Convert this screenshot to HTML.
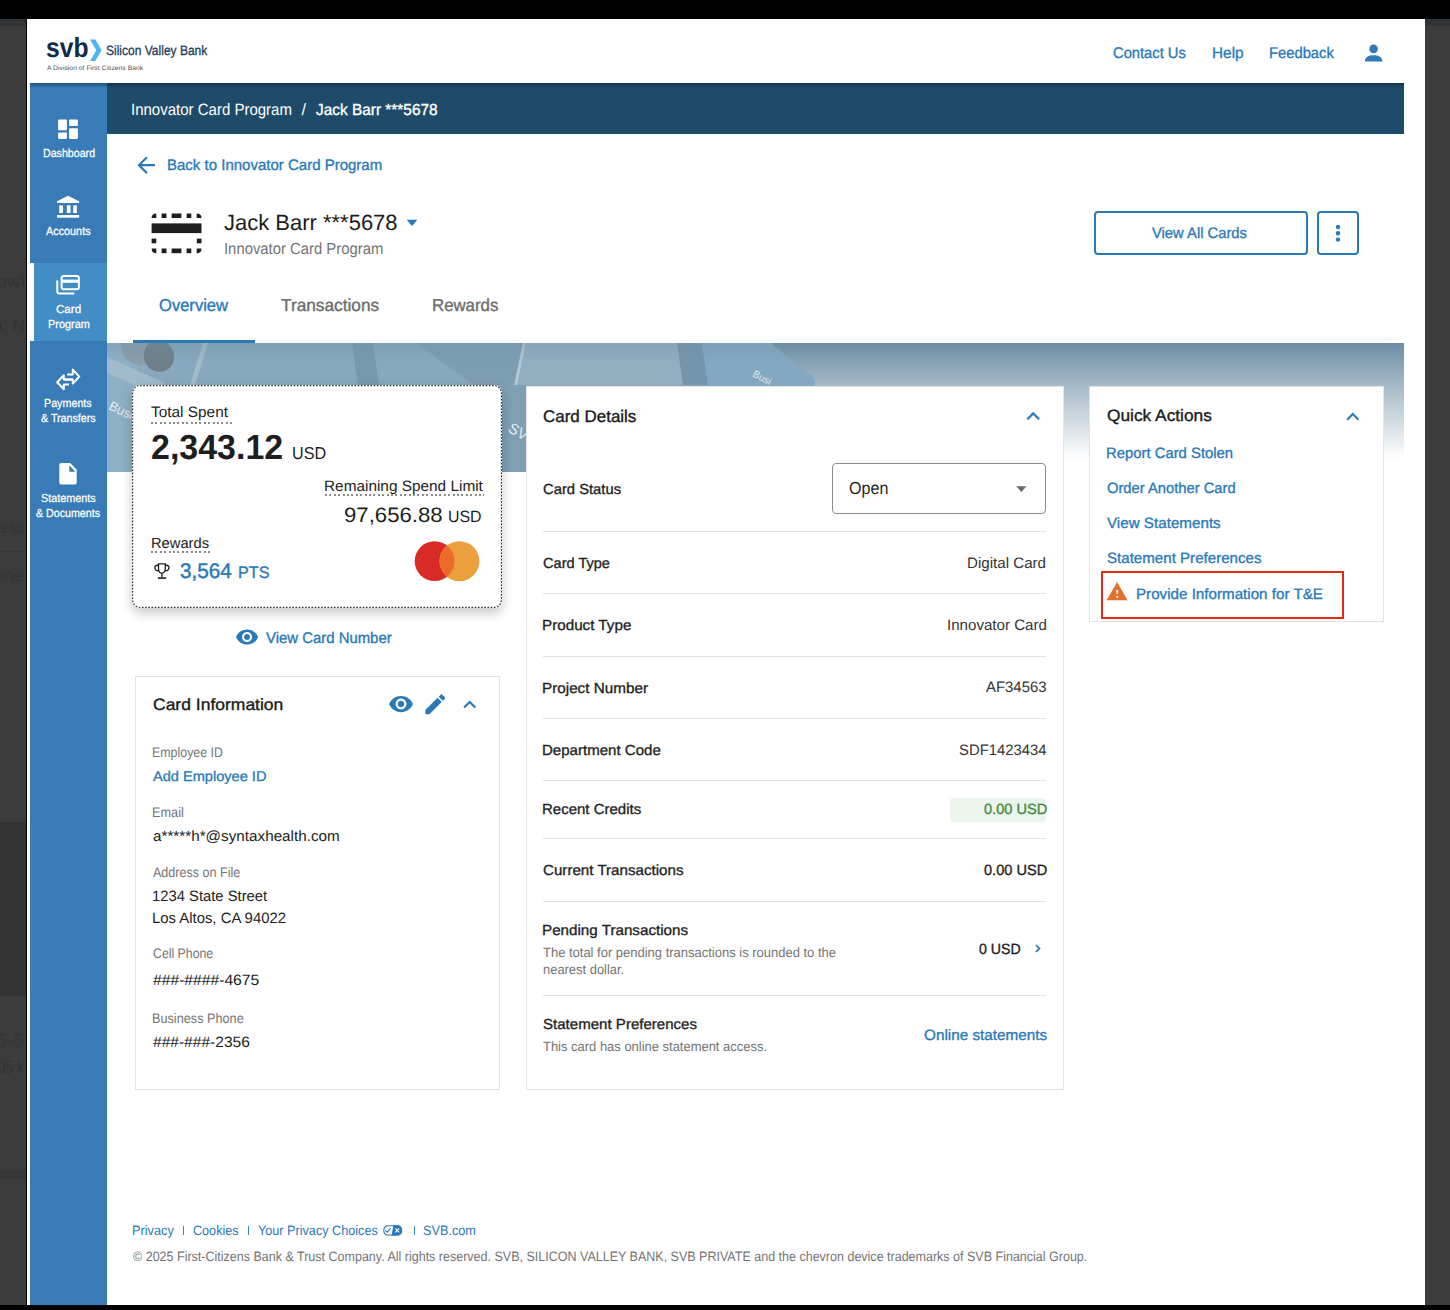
<!DOCTYPE html>
<html><head><meta charset="utf-8">
<style>
html,body{margin:0;padding:0;}
body{width:1450px;height:1310px;position:relative;overflow:hidden;background:#000;font-family:"Liberation Sans",sans-serif;text-rendering:geometricPrecision;}
.a{position:absolute;}
.t{position:absolute;white-space:nowrap;font-family:"Liberation Sans",sans-serif;}
svg{position:absolute;overflow:visible;}
</style></head><body>
<!-- outer frame -->
<div class=a style="left:0;top:19px;width:26px;height:1286px;background:#3c3c3c"></div>
<div class=a style="left:0;top:19px;width:26px;height:7px;background:#313437"></div>
<div class=a style="left:0;top:822px;width:26px;height:174px;background:#333333"></div>
<div class=a style="left:0;top:1170px;width:26px;height:9px;background:#363636"></div>
<div class=a style="left:1425px;top:19px;width:25px;height:1286px;background:#3c3c3c"></div>
<div class=a style="left:0;top:551px;width:26px;height:1px;background:#353535"></div>
<div class=a style="left:1425px;top:19px;width:25px;height:7px;background:#313437"></div>
<div class=a style="left:27px;top:19px;width:1398px;height:1286px;background:#fff"></div>

<!-- sidebar -->
<div class=a style="left:30px;top:83px;width:77px;height:1222px;background:#387bb6"></div>
<div class=a style="left:30px;top:263px;width:4px;height:78px;background:#fff"></div>
<div class=a style="left:34px;top:263px;width:73px;height:78px;background:#428dc6"></div>

<!-- breadcrumb bar -->
<div class=a style="left:107px;top:83px;width:1297px;height:50.5px;background:#1f4b6b"></div>
<div class=a style="left:30px;top:83px;width:1374px;height:5px;background:linear-gradient(rgba(0,10,25,0.38),rgba(0,10,25,0))"></div>

<!-- tab underline -->
<div class=a style="left:133px;top:340px;width:122px;height:3px;background:#2a79b9"></div>

<!-- hero -->
<div class=a style="left:107px;top:343px;width:1297px;height:129px;overflow:hidden;background:#fff">
  <div class=a style="left:600px;top:0;width:697px;height:116px;background:linear-gradient(#6c8da4,#a6bac7 37%,#ffffff)"></div>
  <svg style="left:0;top:0" width="1297" height="129">
    <defs>
      <linearGradient id="hg" x1="0" y1="0" x2="0" y2="1"><stop offset="0" stop-color="#6f8fa5" stop-opacity="0.55"/><stop offset="0.5" stop-color="#6f8fa5" stop-opacity="0"/></linearGradient>
    </defs>
    <polygon points="0,0 663,0 708,36 708,129 0,129" fill="#87a8be"/>
    <polygon points="0,0 30,0 30,129 0,129" fill="#8db0c6"/>
    <circle cx="34" cy="2" r="20" fill="#8b9eab"/>
    <ellipse cx="52" cy="13" rx="15" ry="16" fill="#6f7e89" transform="rotate(-20 52 13)"/>
    <polygon points="0,14 0,30 46,50 58,40" fill="#a9c1cf" opacity="0.7"/>
    <polygon points="96,0 101,0 88,42 83,42" fill="#a8bfcd" opacity="0.8"/>
    <polygon points="245,0 266,0 272,42 251,42" fill="#7898ad"/>
    <polygon points="309,0 417,0 408,42 367,42" fill="#7d9db3"/>
    <polygon points="417,0 570,0 577,42 408,42" fill="#92aec1"/>
    <polygon points="416,0 419,0 410,42 407,42" fill="#b3c8d5"/>
    <polygon points="570,0 595,0 601,42 576,42" fill="#7595ab"/>
    <polygon points="595,0 663,0 704,33 708,42 601,42" fill="#84a8c1"/>
    <polygon points="0,0 663,0 708,36 708,42 0,42" fill="url(#hg)" opacity="0.6"/>
    <polygon points="395,42 420,42 420,129 395,129" fill="#7f9fb5"/>
    <text x="1" y="66" font-family="Liberation Sans" font-size="13" fill="#e3ecf2" transform="rotate(25 1 66)">Busin</text>
    <text x="400" y="88" font-family="Liberation Sans" font-size="15" fill="#e3ecf2" transform="rotate(30 400 88)">SV</text>
    <text x="645" y="33" font-family="Liberation Sans" font-size="10" fill="#dce7ee" transform="rotate(28 645 33)">Busi</text>
  </svg>
</div>

<!-- spend card -->
<div class=a style="left:132px;top:385px;width:370px;height:223px;background:#fff;border-radius:8px;box-shadow:0 5px 12px rgba(0,0,0,0.22)"></div>
<svg style="left:132px;top:385px" width="370" height="223"><rect x="0.6" y="0.6" width="368.8" height="221.8" rx="7.5" fill="none" stroke="#2a2a2a" stroke-width="1.2" stroke-dasharray="1.6 1.6"/></svg>

<!-- card information panel -->
<div class=a style="left:135px;top:676px;width:363px;height:412px;background:#fff;border:1px solid #e3e3e3"></div>

<!-- card details panel -->
<div class=a style="left:526px;top:386px;width:536px;height:702px;background:#fff;border:1px solid #e3e3e3"></div>
<div class=a style="left:831.6px;top:463px;width:212.4px;height:49.2px;border:1px solid #8a8a8a;border-radius:4px"></div>
<div class=a style="left:543px;top:530.5px;width:503px;height:1px;background:#e2e2e2"></div>
<div class=a style="left:543px;top:593px;width:503px;height:1px;background:#e2e2e2"></div>
<div class=a style="left:543px;top:655.5px;width:503px;height:1px;background:#e2e2e2"></div>
<div class=a style="left:543px;top:718px;width:503px;height:1px;background:#e2e2e2"></div>
<div class=a style="left:543px;top:780px;width:503px;height:1px;background:#e2e2e2"></div>
<div class=a style="left:543px;top:838px;width:503px;height:1px;background:#e2e2e2"></div>
<div class=a style="left:543px;top:900.5px;width:503px;height:1px;background:#e2e2e2"></div>
<div class=a style="left:543px;top:994.5px;width:503px;height:1px;background:#e2e2e2"></div>
<div class=a style="left:950px;top:798px;width:96px;height:23.5px;background:#ecf5eb;border-radius:3px"></div>

<!-- quick actions panel -->
<div class=a style="left:1089px;top:386px;width:293px;height:234px;background:#fff;border:1px solid #e3e3e3"></div>
<div class=a style="left:1101px;top:571px;width:239px;height:44px;border:2px solid #e22a14"></div>

<!-- buttons -->
<div class=a style="left:1094px;top:211px;width:210px;height:40px;border:2px solid #2a79b9;border-radius:4px"></div>
<div class=a style="left:1317px;top:211px;width:38px;height:40px;border:2px solid #2a79b9;border-radius:4px"></div>


<!-- LOGO -->
<svg style="left:0;top:0" width="1450" height="1310">
  <text x="46" y="57" font-family="Liberation Sans" font-weight="bold" font-size="27.5" fill="#0f2b47" textLength="42.5" lengthAdjust="spacingAndGlyphs">svb</text>
  <polygon points="90,39.6 95.3,39.6 101.6,50.2 95.3,60.9 90,60.9 96.3,50.2" fill="#4fb5f2"/>
</svg>
<!-- user icon -->
<svg style="left:0;top:0" width="1450" height="1310">
  <circle cx="1373.6" cy="48.9" r="4.3" fill="#2f7bb8"/>
  <path d="M1364.8,61.6 C1364.8,57 1368.8,55.2 1373.6,55.2 C1378.4,55.2 1382.4,57 1382.4,61.6 Z" fill="#2f7bb8"/>
</svg>
<!-- sidebar icons -->
<svg style="left:0;top:0" width="1450" height="1310" fill="#fff">
  <rect x="58.1" y="119.5" width="8.8" height="10.8" rx="0.8"/>
  <rect x="69.1" y="119.5" width="8.8" height="6.5" rx="0.8"/>
  <rect x="58.1" y="132.4" width="8.8" height="6.5" rx="0.8"/>
  <rect x="69.1" y="128.3" width="8.8" height="10.6" rx="0.8"/>
  <polygon points="68,195.8 79.1,201.2 79.1,203.1 57,203.1 57,201.2"/>
  <rect x="59.2" y="205.2" width="3.8" height="7.8" rx="0.6"/>
  <rect x="66.8" y="205.2" width="3.8" height="7.8" rx="0.6"/>
  <rect x="73.2" y="205.2" width="3.7" height="7.8" rx="0.6"/>
  <rect x="57" y="215" width="22.1" height="2.7"/>
  <g fill="none" stroke="#fff" stroke-width="2">
    <rect x="61.6" y="276" width="17.3" height="13.3" rx="2.2"/>
    <line x1="61.6" y1="281.2" x2="78.9" y2="281.2" stroke-width="3.2"/>
    <path d="M57.3,280.4 V291.6 Q57.3,293.6 59.3,293.6 H74.3" />
    <path d="M67.1,374.4 H72.8 V369.6 L79.3,376.6 L72.8,383.6 V379.6 H64" stroke-linejoin="round"/>
    <path d="M69,384.6 H63.8 V389.2 L57.2,382.2 L63.8,375.2 V379.6 H72.8" stroke-linejoin="round"/>
  </g>
  <path d="M61.3,463.1 H70.1 L76.7,469.6 V482.6 Q76.7,484.6 74.7,484.6 H61.3 Q59.3,484.6 59.3,482.6 V465.1 Q59.3,463.1 61.3,463.1 Z"/>
  <polygon points="69.3,465.3 69.3,471.8 75.3,471.8" fill="#387bb6"/>
</svg>
<!-- back arrow -->
<svg style="left:132.6px;top:152.1px" width="26.4" height="26.4" viewBox="0 0 24 24"><path fill="#2a79b9" d="M20 11H7.83l5.59-5.59L12 4l-8 8 8 8 1.41-1.41L7.83 13H20v-2z"/></svg>
<!-- card icon -->
<svg style="left:0;top:0" width="1450" height="1310" fill="#1e1e1e">
  <path d="M156.3,213.5 V218 H151.6 Q151.6,213.5 156.3,213.5 Z"/>
  <rect x="161.6" y="213.5" width="4.9" height="4.5"/>
  <rect x="171.6" y="213.5" width="9.8" height="4.5"/>
  <rect x="186.6" y="213.5" width="4.7" height="4.5"/>
  <path d="M196.7,213.5 V218 H201.5 Q201.5,213.5 196.7,213.5 Z"/>
  <rect x="151.6" y="223.4" width="49.9" height="9.7"/>
  <rect x="151.6" y="238.6" width="4.7" height="4.7"/>
  <rect x="196.8" y="238.6" width="4.7" height="4.7"/>
  <path d="M156.3,253.2 V248.5 H151.6 Q151.6,253.2 156.3,253.2 Z"/>
  <rect x="161.6" y="248.5" width="4.9" height="4.7"/>
  <rect x="171.6" y="248.5" width="9.8" height="4.7"/>
  <rect x="186.6" y="248.5" width="4.7" height="4.7"/>
  <path d="M196.7,253.2 V248.5 H201.5 Q201.5,253.2 196.7,253.2 Z"/>
</svg>
<!-- name dropdown -->
<svg style="left:0;top:0" width="1450" height="1310">
  <polygon points="406.7,219.8 417.4,219.8 412.05,225.9" fill="#2a79b9"/>
  <circle cx="1338" cy="227" r="2.2" fill="#2a79b9"/>
  <circle cx="1338" cy="233.3" r="2.2" fill="#2a79b9"/>
  <circle cx="1338" cy="239.6" r="2.2" fill="#2a79b9"/>
  <polygon points="1016.2,486.2 1026.5,486.2 1021.35,492" fill="#6b6b6b"/>
  <polyline points="1035.9,945 1039.5,948.4 1035.9,951.8" fill="none" stroke="#2a79b9" stroke-width="1.7"/>
  <polygon points="1117.1,581.9 1127.6,600.3 1106.6,600.3" fill="#e0722d"/>
  <rect x="1116.2" y="590" width="2" height="3.8" fill="#fbe9dc"/>
  <rect x="1116.2" y="595.8" width="2" height="2" fill="#fbe9dc"/>
</svg>
<!-- chevrons up -->
<svg style="left:456.6px;top:692.2px" width="25.4" height="25.4" viewBox="0 0 24 24"><path fill="#2a79b9" d="M12 8l-6 6 1.41 1.41L12 10.83l4.59 4.58L18 14z"/></svg>
<svg style="left:1019.8px;top:402.7px" width="26.4" height="26.4" viewBox="0 0 24 24"><path fill="#2a79b9" d="M12 8l-6 6 1.41 1.41L12 10.83l4.59 4.58L18 14z"/></svg>
<svg style="left:1340px;top:403.5px" width="25.6" height="25.6" viewBox="0 0 24 24"><path fill="#2a79b9" d="M12 8l-6 6 1.41 1.41L12 10.83l4.59 4.58L18 14z"/></svg>
<!-- eye / edit -->
<svg style="left:387.9px;top:691.4px" width="26.06" height="26.06" viewBox="0 0 24 24"><path fill="#2a79b9" d="M12 4.5C7 4.5 2.73 7.61 1 12c1.730 4.39 6 7.5 11 7.5s9.27-3.11 11-7.5c-1.73-4.39-6-7.5-11-7.5zM12 17c-2.76 0-5-2.24-5-5s2.240-5 5-5 5 2.24 5 5-2.24 5-5 5zm0-8c-1.66 0-3 1.34-3 3s1.34 3 3 3 3-1.34 3-3-1.34-3-3-3z"/></svg>
<svg style="left:422px;top:691.2px" width="26.54" height="26.54" viewBox="0 0 24 24"><path fill="#2a79b9" d="M3 17.25V21h3.75L17.81 9.94l-3.75-3.75L3 17.25zM20.71 7.04c.39-.39.39-1.02 0-1.41l-2.34-2.34c-.39-.39-1.02-.39-1.41 0l-1.83 1.83 3.75 3.75 1.83-1.83z"/></svg>
<svg style="left:234.7px;top:625px" width="24.12" height="24.12" viewBox="0 0 24 24"><path fill="#2a79b9" d="M12 4.5C7 4.5 2.73 7.61 1 12c1.730 4.39 6 7.5 11 7.5s9.27-3.11 11-7.5c-1.73-4.39-6-7.5-11-7.5zM12 17c-2.76 0-5-2.24-5-5s2.240-5 5-5 5 2.24 5 5-2.24 5-5 5zm0-8c-1.66 0-3 1.34-3 3s1.34 3 3 3 3-1.34 3-3-1.34-3-3-3z"/></svg>
<!-- trophy -->
<svg style="left:0;top:0" width="1450" height="1310" fill="none" stroke="#1e1e1e" stroke-width="1.3">
  <path d="M158.5,563.9 H165.3 V568.6 C165.3,571.4 163.9,573.1 161.9,573.3 C159.9,573.1 158.5,571.4 158.5,568.6 Z"/>
  <path d="M158.5,565.3 C155.4,564.9 154.5,566.6 154.9,568.4 C155.3,570.2 156.7,571 158.7,570.9"/>
  <path d="M165.3,565.3 C168.4,564.9 169.3,566.6 168.9,568.4 C168.5,570.2 167.1,571 165.1,570.9"/>
  <path d="M161.9,573.3 V577.6"/>
  <path d="M157.8,578.1 H166.1" stroke-width="1.6"/>
</svg>
<!-- mastercard -->
<svg style="left:0;top:0" width="1450" height="1310">
  <circle cx="434.6" cy="561.2" r="19.9" fill="#da2a25"/>
  <circle cx="459.4" cy="561.2" r="20" fill="#eba03e"/>
  <path d="M447,545.6 A19.9,19.9 0 0 1 447,576.8 A20,20 0 0 1 447,545.6 Z" fill="#ec6a2a"/>
</svg>
<!-- dotted underlines -->
<div class=a style="left:150.6px;top:421.8px;width:82px;height:2px;background:repeating-linear-gradient(to right,#8c8c8c 0 2px,transparent 2px 4.4px)"></div>
<div class=a style="left:325.4px;top:494px;width:159px;height:2px;background:repeating-linear-gradient(to right,#8c8c8c 0 2px,transparent 2px 4.4px)"></div>
<div class=a style="left:150.6px;top:551px;width:59px;height:2px;background:repeating-linear-gradient(to right,#8c8c8c 0 2px,transparent 2px 4.4px)"></div>
<!-- footer separators and toggle -->
<div class=a style="left:182.6px;top:1226.3px;width:1.5px;height:8.5px;background:#3a86c2"></div>
<div class=a style="left:247.9px;top:1226.3px;width:1.5px;height:8.5px;background:#3a86c2"></div>
<div class=a style="left:413.5px;top:1226.3px;width:1.5px;height:8.5px;background:#3a86c2"></div>
<svg style="left:0;top:0" width="1450" height="1310">
  <path d="M387,1225.8 H397.8 A4.9,4.9 0 0 1 397.8,1235.0 H387 A4.9,4.9 0 0 1 387,1225.8 Z" fill="none" stroke="#2a79b9" stroke-width="1.1"/>
  <path d="M393.5,1225.3 H397.8 A5.2,5.2 0 0 1 397.8,1235.6 H391.5 Z" fill="#2a79b9"/>
  <polyline points="385.2,1230.3 387.2,1232.2 390.6,1228.3" fill="none" stroke="#2a79b9" stroke-width="1.1"/>
  <path d="M395.3,1228.3 L399.2,1232.4 M399.2,1228.3 L395.3,1232.4" stroke="#fff" stroke-width="1.1"/>
</svg>

<div class=t style="left:105.60px;top:44px;font-size:13.52px;line-height:13.52px;font-weight:normal;transform:scaleX(0.8890);transform-origin:0 0;color:#1d3b5c;-webkit-text-stroke:0.30px #1d3b5c;">Silicon Valley Bank</div>
<div class=t style="left:46.80px;top:66px;font-size:6.40px;line-height:6.40px;font-weight:normal;transform:scaleX(1.0664);transform-origin:0 0;color:#4a5560;">A Division of First Citizens Bank</div>
<div class=t style="left:1112.80px;top:46px;font-size:15.41px;line-height:15.41px;font-weight:normal;transform:scaleX(0.9564);transform-origin:0 0;color:#2a79b9;-webkit-text-stroke:0.34px #2a79b9;">Contact Us</div>
<div class=t style="left:1211.80px;top:46px;font-size:15.41px;line-height:15.41px;font-weight:normal;transform:scaleX(0.9969);transform-origin:0 0;color:#2a79b9;-webkit-text-stroke:0.34px #2a79b9;">Help</div>
<div class=t style="left:1268.74px;top:46px;font-size:15.41px;line-height:15.41px;font-weight:normal;transform:scaleX(0.9582);transform-origin:0 0;color:#2a79b9;-webkit-text-stroke:0.34px #2a79b9;">Feedback</div>
<div class=t style="left:131.39px;top:102px;font-size:16.42px;line-height:16.42px;font-weight:normal;transform:scaleX(0.9144);transform-origin:0 0;color:#ffffff;">Innovator Card Program</div>
<div class=t style="left:301.50px;top:102px;font-size:16.42px;line-height:16.42px;font-weight:normal;transform:scaleX(1.0000);transform-origin:0 0;color:#ffffff;">/</div>
<div class=t style="left:316.00px;top:103px;font-size:15.99px;line-height:15.99px;font-weight:normal;transform:scaleX(0.9638);transform-origin:0 0;color:#ffffff;-webkit-text-stroke:0.35px #ffffff;">Jack Barr ***5678</div>
<div class=t style="left:167.32px;top:158px;font-size:15.26px;line-height:15.26px;font-weight:normal;transform:scaleX(0.9840);transform-origin:0 0;color:#2a79b9;-webkit-text-stroke:0.34px #2a79b9;">Back to Innovator Card Program</div>
<div class=t style="left:224.30px;top:212px;font-size:22.09px;line-height:22.09px;font-weight:normal;transform:scaleX(0.9961);transform-origin:0 0;color:#1c1c1c;">Jack Barr ***5678</div>
<div class=t style="left:223.68px;top:241px;font-size:16.13px;line-height:16.13px;font-weight:normal;transform:scaleX(0.9216);transform-origin:0 0;color:#747474;">Innovator Card Program</div>
<div class=t style="left:159.00px;top:297px;font-size:17.30px;line-height:17.30px;font-weight:normal;transform:scaleX(0.9581);transform-origin:0 0;color:#2a79b9;-webkit-text-stroke:0.38px #2a79b9;">Overview</div>
<div class=t style="left:281.20px;top:297px;font-size:17.30px;line-height:17.30px;font-weight:normal;transform:scaleX(0.9985);transform-origin:0 0;color:#6e6e6e;-webkit-text-stroke:0.38px #6e6e6e;">Transactions</div>
<div class=t style="left:431.63px;top:297px;font-size:17.30px;line-height:17.30px;font-weight:normal;transform:scaleX(0.9726);transform-origin:0 0;color:#6e6e6e;-webkit-text-stroke:0.38px #6e6e6e;">Rewards</div>
<div class=t style="left:1152.40px;top:226px;font-size:15.12px;line-height:15.12px;font-weight:normal;transform:scaleX(0.9775);transform-origin:0 0;color:#2a79b9;-webkit-text-stroke:0.33px #2a79b9;">View All Cards</div>
<div class=t style="left:151.20px;top:405px;font-size:15.12px;line-height:15.12px;font-weight:normal;transform:scaleX(1.0183);transform-origin:0 0;color:#222;">Total Spent</div>
<div class=t style="left:151.23px;top:431px;font-size:34.88px;line-height:34.88px;font-weight:bold;transform:scaleX(0.9741);transform-origin:0 0;color:#1e1e1e;">2,343.12</div>
<div class=t style="left:292.37px;top:445px;font-size:17.30px;line-height:17.30px;font-weight:normal;transform:scaleX(0.9341);transform-origin:0 0;color:#1e1e1e;">USD</div>
<div class=t style="left:324.17px;top:480px;font-size:14.97px;line-height:14.97px;font-weight:normal;transform:scaleX(1.0265);transform-origin:0 0;color:#222;">Remaining Spend Limit</div>
<div class=t style="left:344.30px;top:506px;font-size:20.93px;line-height:20.93px;font-weight:normal;transform:scaleX(1.0601);transform-origin:0 0;color:#1e1e1e;">97,656.88</div>
<div class=t style="left:448.03px;top:509px;font-size:16.42px;line-height:16.42px;font-weight:normal;transform:scaleX(0.9707);transform-origin:0 0;color:#1e1e1e;">USD</div>
<div class=t style="left:150.60px;top:537px;font-size:14.68px;line-height:14.68px;font-weight:normal;transform:scaleX(1.0025);transform-origin:0 0;color:#222;">Rewards</div>
<div class=t style="left:179.50px;top:561px;font-size:21.08px;line-height:21.08px;font-weight:normal;transform:scaleX(0.9794);transform-origin:0 0;color:#2a79b9;-webkit-text-stroke:0.46px #2a79b9;">3,564</div>
<div class=t style="left:237.73px;top:565px;font-size:16.72px;line-height:16.72px;font-weight:normal;transform:scaleX(0.9667);transform-origin:0 0;color:#2a79b9;-webkit-text-stroke:0.37px #2a79b9;">PTS</div>
<div class=t style="left:266.00px;top:631px;font-size:15.41px;line-height:15.41px;font-weight:normal;transform:scaleX(0.9676);transform-origin:0 0;color:#2a79b9;-webkit-text-stroke:0.34px #2a79b9;">View Card Number</div>
<div class=t style="left:152.60px;top:697px;font-size:16.42px;line-height:16.42px;font-weight:normal;transform:scaleX(1.0666);transform-origin:0 0;color:#1a1a1a;-webkit-text-stroke:0.36px #1a1a1a;">Card Information</div>
<div class=t style="left:151.71px;top:746px;font-size:13.95px;line-height:13.95px;font-weight:normal;transform:scaleX(0.8892);transform-origin:0 0;color:#747474;">Employee ID</div>
<div class=t style="left:152.60px;top:769px;font-size:14.10px;line-height:14.10px;font-weight:normal;transform:scaleX(1.0340);transform-origin:0 0;color:#2a79b9;-webkit-text-stroke:0.31px #2a79b9;">Add Employee ID</div>
<div class=t style="left:151.69px;top:806px;font-size:13.95px;line-height:13.95px;font-weight:normal;transform:scaleX(0.9125);transform-origin:0 0;color:#747474;">Email</div>
<div class=t style="left:152.60px;top:830px;font-size:14.83px;line-height:14.83px;font-weight:normal;transform:scaleX(1.0286);transform-origin:0 0;color:#222;">a*****h*@syntaxhealth.com</div>
<div class=t style="left:152.60px;top:866px;font-size:13.95px;line-height:13.95px;font-weight:normal;transform:scaleX(0.9003);transform-origin:0 0;color:#747474;">Address on File</div>
<div class=t style="left:151.61px;top:890px;font-size:14.97px;line-height:14.97px;font-weight:normal;transform:scaleX(0.9884);transform-origin:0 0;color:#222;">1234 State Street</div>
<div class=t style="left:151.61px;top:912px;font-size:14.97px;line-height:14.97px;font-weight:normal;transform:scaleX(0.9938);transform-origin:0 0;color:#222;">Los Altos, CA 94022</div>
<div class=t style="left:152.60px;top:947px;font-size:13.95px;line-height:13.95px;font-weight:normal;transform:scaleX(0.8826);transform-origin:0 0;color:#747474;">Cell Phone</div>
<div class=t style="left:152.60px;top:974px;font-size:14.97px;line-height:14.97px;font-weight:normal;transform:scaleX(1.0463);transform-origin:0 0;color:#222;">###-####-4675</div>
<div class=t style="left:151.69px;top:1012px;font-size:13.95px;line-height:13.95px;font-weight:normal;transform:scaleX(0.9102);transform-origin:0 0;color:#747474;">Business Phone</div>
<div class=t style="left:152.60px;top:1036px;font-size:14.97px;line-height:14.97px;font-weight:normal;transform:scaleX(1.0388);transform-origin:0 0;color:#222;">###-###-2356</div>
<div class=t style="left:542.80px;top:409px;font-size:16.86px;line-height:16.86px;font-weight:normal;transform:scaleX(1.0062);transform-origin:0 0;color:#1a1a1a;-webkit-text-stroke:0.37px #1a1a1a;">Card Details</div>
<div class=t style="left:542.80px;top:483px;font-size:14.54px;line-height:14.54px;font-weight:normal;transform:scaleX(1.0172);transform-origin:0 0;color:#1e1e1e;-webkit-text-stroke:0.32px #1e1e1e;">Card Status</div>
<div class=t style="left:849.30px;top:480px;font-size:17.44px;line-height:17.44px;font-weight:normal;transform:scaleX(0.9223);transform-origin:0 0;color:#1e1e1e;">Open</div>
<div class=t style="left:542.80px;top:557px;font-size:14.54px;line-height:14.54px;font-weight:normal;transform:scaleX(1.0031);transform-origin:0 0;color:#1e1e1e;-webkit-text-stroke:0.32px #1e1e1e;">Card Type</div>
<div class=t style="left:967.40px;top:556px;font-size:15.12px;line-height:15.12px;font-weight:normal;transform:scaleX(1.0009);transform-origin:0 0;color:#333;">Digital Card</div>
<div class=t style="left:541.75px;top:619px;font-size:14.54px;line-height:14.54px;font-weight:normal;transform:scaleX(1.0467);transform-origin:0 0;color:#1e1e1e;-webkit-text-stroke:0.32px #1e1e1e;">Product Type</div>
<div class=t style="left:946.50px;top:618px;font-size:15.12px;line-height:15.12px;font-weight:normal;transform:scaleX(0.9996);transform-origin:0 0;color:#333;">Innovator Card</div>
<div class=t style="left:541.75px;top:682px;font-size:14.54px;line-height:14.54px;font-weight:normal;transform:scaleX(1.0500);transform-origin:0 0;color:#1e1e1e;-webkit-text-stroke:0.32px #1e1e1e;">Project Number</div>
<div class=t style="left:985.90px;top:680px;font-size:15.12px;line-height:15.12px;font-weight:normal;transform:scaleX(0.9865);transform-origin:0 0;color:#333;">AF34563</div>
<div class=t style="left:541.76px;top:744px;font-size:14.54px;line-height:14.54px;font-weight:normal;transform:scaleX(1.0361);transform-origin:0 0;color:#1e1e1e;-webkit-text-stroke:0.32px #1e1e1e;">Department Code</div>
<div class=t style="left:958.90px;top:743px;font-size:15.12px;line-height:15.12px;font-weight:normal;transform:scaleX(0.9827);transform-origin:0 0;color:#333;">SDF1423434</div>
<div class=t style="left:541.77px;top:803px;font-size:14.54px;line-height:14.54px;font-weight:normal;transform:scaleX(1.0322);transform-origin:0 0;color:#1e1e1e;-webkit-text-stroke:0.32px #1e1e1e;">Recent Credits</div>
<div class=t style="left:983.60px;top:803px;font-size:14.83px;line-height:14.83px;font-weight:normal;transform:scaleX(0.9823);transform-origin:0 0;color:#3f8c3f;-webkit-text-stroke:0.33px #3f8c3f;">0.00 USD</div>
<div class=t style="left:542.80px;top:864px;font-size:14.54px;line-height:14.54px;font-weight:normal;transform:scaleX(1.0413);transform-origin:0 0;color:#1e1e1e;-webkit-text-stroke:0.32px #1e1e1e;">Current Transactions</div>
<div class=t style="left:983.60px;top:864px;font-size:14.83px;line-height:14.83px;font-weight:normal;transform:scaleX(0.9823);transform-origin:0 0;color:#1e1e1e;-webkit-text-stroke:0.33px #1e1e1e;">0.00 USD</div>
<div class=t style="left:541.75px;top:924px;font-size:14.54px;line-height:14.54px;font-weight:normal;transform:scaleX(1.0454);transform-origin:0 0;color:#1e1e1e;-webkit-text-stroke:0.32px #1e1e1e;">Pending Transactions</div>
<div class=t style="left:542.80px;top:946px;font-size:13.52px;line-height:13.52px;font-weight:normal;transform:scaleX(0.9603);transform-origin:0 0;color:#747474;">The total for pending transactions is rounded to the</div>
<div class=t style="left:542.80px;top:963px;font-size:13.52px;line-height:13.52px;font-weight:normal;transform:scaleX(0.9565);transform-origin:0 0;color:#747474;">nearest dollar.</div>
<div class=t style="left:979.10px;top:943px;font-size:14.83px;line-height:14.83px;font-weight:normal;transform:scaleX(0.9550);transform-origin:0 0;color:#1e1e1e;-webkit-text-stroke:0.33px #1e1e1e;">0 USD</div>
<div class=t style="left:542.80px;top:1018px;font-size:14.54px;line-height:14.54px;font-weight:normal;transform:scaleX(1.0364);transform-origin:0 0;color:#1e1e1e;-webkit-text-stroke:0.32px #1e1e1e;">Statement Preferences</div>
<div class=t style="left:542.80px;top:1040px;font-size:13.52px;line-height:13.52px;font-weight:normal;transform:scaleX(0.9587);transform-origin:0 0;color:#747474;">This card has online statement access.</div>
<div class=t style="left:923.50px;top:1029px;font-size:14.97px;line-height:14.97px;font-weight:normal;transform:scaleX(1.0212);transform-origin:0 0;color:#2a79b9;-webkit-text-stroke:0.33px #2a79b9;">Online statements</div>
<div class=t style="left:1106.50px;top:408px;font-size:16.57px;line-height:16.57px;font-weight:normal;transform:scaleX(1.0449);transform-origin:0 0;color:#1a1a1a;-webkit-text-stroke:0.36px #1a1a1a;">Quick Actions</div>
<div class=t style="left:1105.51px;top:447px;font-size:14.97px;line-height:14.97px;font-weight:normal;transform:scaleX(0.9920);transform-origin:0 0;color:#2a79b9;-webkit-text-stroke:0.33px #2a79b9;">Report Card Stolen</div>
<div class=t style="left:1106.50px;top:482px;font-size:14.97px;line-height:14.97px;font-weight:normal;transform:scaleX(0.9845);transform-origin:0 0;color:#2a79b9;-webkit-text-stroke:0.33px #2a79b9;">Order Another Card</div>
<div class=t style="left:1106.50px;top:517px;font-size:14.97px;line-height:14.97px;font-weight:normal;transform:scaleX(1.0147);transform-origin:0 0;color:#2a79b9;-webkit-text-stroke:0.33px #2a79b9;">View Statements</div>
<div class=t style="left:1106.50px;top:552px;font-size:14.97px;line-height:14.97px;font-weight:normal;transform:scaleX(1.0091);transform-origin:0 0;color:#2a79b9;-webkit-text-stroke:0.33px #2a79b9;">Statement Preferences</div>
<div class=t style="left:1135.99px;top:588px;font-size:14.97px;line-height:14.97px;font-weight:normal;transform:scaleX(1.0136);transform-origin:0 0;color:#2a79b9;-webkit-text-stroke:0.33px #2a79b9;">Provide Information for T&amp;E</div>
<div class=t style="left:42.50px;top:148px;font-size:11.63px;line-height:11.63px;font-weight:normal;transform:scaleX(0.9159);transform-origin:0 0;color:#fff;-webkit-text-stroke:0.26px #fff;">Dashboard</div>
<div class=t style="left:45.95px;top:226px;font-size:11.63px;line-height:11.63px;font-weight:normal;transform:scaleX(0.9323);transform-origin:0 0;color:#fff;-webkit-text-stroke:0.26px #fff;">Accounts</div>
<div class=t style="left:55.95px;top:304px;font-size:11.63px;line-height:11.63px;font-weight:normal;transform:scaleX(1.0000);transform-origin:0 0;color:#fff;-webkit-text-stroke:0.26px #fff;">Card</div>
<div class=t style="left:47.75px;top:319px;font-size:11.63px;line-height:11.63px;font-weight:normal;transform:scaleX(0.9374);transform-origin:0 0;color:#fff;-webkit-text-stroke:0.26px #fff;">Program</div>
<div class=t style="left:44.40px;top:398px;font-size:11.63px;line-height:11.63px;font-weight:normal;transform:scaleX(0.9225);transform-origin:0 0;color:#fff;-webkit-text-stroke:0.26px #fff;">Payments</div>
<div class=t style="left:40.85px;top:413px;font-size:11.63px;line-height:11.63px;font-weight:normal;transform:scaleX(0.9187);transform-origin:0 0;color:#fff;-webkit-text-stroke:0.26px #fff;">&amp; Transfers</div>
<div class=t style="left:40.85px;top:493px;font-size:11.63px;line-height:11.63px;font-weight:normal;transform:scaleX(0.9318);transform-origin:0 0;color:#fff;-webkit-text-stroke:0.26px #fff;">Statements</div>
<div class=t style="left:36.25px;top:508px;font-size:11.63px;line-height:11.63px;font-weight:normal;transform:scaleX(0.9173);transform-origin:0 0;color:#fff;-webkit-text-stroke:0.26px #fff;">&amp; Documents</div>
<div class=t style="left:-4.00px;top:273px;font-size:17.44px;line-height:17.44px;font-weight:normal;transform:scaleX(1.1071);transform-origin:0 0;color:#333333;">owi</div>
<div class=t style="left:-6.99px;top:317px;font-size:17.44px;line-height:17.44px;font-weight:normal;transform:scaleX(0.9873);transform-origin:0 0;color:#333333;">n: N</div>
<div class=t style="left:-8.82px;top:519px;font-size:17.44px;line-height:17.44px;font-weight:normal;transform:scaleX(0.8203);transform-origin:0 0;color:#343434;">Resc</div>
<div class=t style="left:-5.00px;top:567px;font-size:17.44px;line-height:17.44px;font-weight:normal;transform:scaleX(0.9861);transform-origin:0 0;color:#343434;">one</div>
<div class=t style="left:-3.00px;top:1032px;font-size:17.44px;line-height:17.44px;font-weight:normal;transform:scaleX(1.0610);transform-origin:0 0;color:#363636;">5-5</div>
<div class=t style="left:-2.00px;top:1059px;font-size:17.44px;line-height:17.44px;font-weight:normal;transform:scaleX(0.7822);transform-origin:0 0;color:#333333;">05 k</div>
<div class=t style="left:131.97px;top:1224px;font-size:13.66px;line-height:13.66px;font-weight:normal;transform:scaleX(0.9331);transform-origin:0 0;color:#2a79b9;">Privacy</div>
<div class=t style="left:192.70px;top:1224px;font-size:13.66px;line-height:13.66px;font-weight:normal;transform:scaleX(0.9231);transform-origin:0 0;color:#2a79b9;">Cookies</div>
<div class=t style="left:258.30px;top:1224px;font-size:13.66px;line-height:13.66px;font-weight:normal;transform:scaleX(0.9262);transform-origin:0 0;color:#2a79b9;">Your Privacy Choices</div>
<div class=t style="left:423.40px;top:1224px;font-size:13.66px;line-height:13.66px;font-weight:normal;transform:scaleX(0.9303);transform-origin:0 0;color:#2a79b9;">SVB.com</div>
<div class=t style="left:132.90px;top:1250px;font-size:13.66px;line-height:13.66px;font-weight:normal;transform:scaleX(0.9160);transform-origin:0 0;color:#747474;">© 2025 First-Citizens Bank &amp; Trust Company. All rights reserved. SVB, SILICON VALLEY BANK, SVB PRIVATE and the chevron device trademarks of SVB Financial Group.</div>
<div class=a style="left:26px;top:19px;width:1px;height:1286px;background:#000"></div>
<div class=a style="left:0;top:0;width:1450px;height:19px;background:#000"></div>
</body></html>
